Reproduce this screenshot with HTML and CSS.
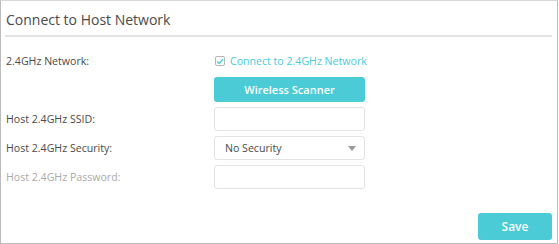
FILE: index.html
```html
<!DOCTYPE html>
<html lang="en">
<head>
  <meta charset="UTF-8">
  <title>Connect to Host Network</title>
  <link rel="stylesheet" href="styles.css">
</head>
<body>
  <div class="panel">
    <h2 class="panel-title">Connect to Host Network</h2>

    <div class="form">
      <div class="form-row row-check">
        <span class="label">2.4GHz Network:</span>
        <label class="check">
          <span class="check-box">
            <svg width="8" height="7" viewBox="0 0 8 7"><path d="M1 3.5 L3.2 5.6 L7 1.2" fill="none" stroke="#4acbd6" stroke-width="1.4"/></svg>
          </span>
          Connect to 2.4GHz Network
        </label>
      </div>

      <div class="form-row row-scan">
        <span class="label"></span>
        <button class="btn btn-scan">Wireless Scanner</button>
      </div>

      <div class="form-row">
        <span class="label">Host 2.4GHz SSID:</span>
        <div class="field"></div>
      </div>

      <div class="form-row">
        <span class="label">Host 2.4GHz Security:</span>
        <div class="field select">
          <span>No Security</span>
          <span class="arrow"></span>
        </div>
      </div>

      <div class="form-row">
        <span class="label disabled">Host 2.4GHz Password:</span>
        <div class="field"></div>
      </div>
    </div>

    <div class="actions">
      <button class="btn btn-save">Save</button>
    </div>
  </div>
</body>
</html>
```

FILE: styles.css
```css
:root {
  --teal: #4acbd6;
  --text-color: #4a4a4a;
  --muted: #aaa;
  --line: #e3e3e3;
}

body {
  margin: 0;
  font-family: "Open Sans", "Liberation Sans", sans-serif;
  color: var(--text-color);
  background: #fff;
}

.panel {
  box-sizing: border-box;
  width: 558px;
  height: 244px;
  border: 1px solid #bcbcbc;
  border-top-color: #d8d8d8;
  padding: 0 5px 0 4px;
}

.panel-title {
  margin: 0;
  height: 36px;
  padding-top: 9px;
  box-sizing: border-box;
  font-size: 14px;
  font-weight: normal;
  line-height: 20px;
  padding-left: 1px;
  border-bottom: 2px solid var(--line);
}

.form {
  display: flex;
  flex-direction: column;
  gap: 5px;
  margin-top: 15px;
  font-size: 10.6px;
}

.form-row {
  display: grid;
  grid-template-columns: 209px 151px;
  align-items: center;
  height: 24px;
}

.row-check {
  height: 18px;
  margin-bottom: 2px;
}

.row-scan {
  height: 25px;
}

.label {
  padding-left: 1px;
}

.label.disabled {
  color: var(--muted);
}

.check {
  display: flex;
  align-items: center;
  gap: 5px;
  color: var(--teal);
  padding-left: 1px;
  white-space: nowrap;
}

.check-box {
  box-sizing: border-box;
  width: 10px;
  height: 10px;
  border: 1px solid #b5b5b5;
  border-radius: 2px;
  display: flex;
  align-items: center;
  justify-content: center;
}

.btn {
  border: none;
  border-radius: 3px;
  background: var(--teal);
  color: #fff;
  font-family: inherit;
  font-weight: 600;
  padding: 0;
  cursor: pointer;
}

.btn-scan {
  height: 25px;
  width: 151px;
  font-size: 11px;
}

.field {
  box-sizing: border-box;
  height: 24px;
  border: 1px solid var(--line);
  border-radius: 3px;
}

.select {
  display: flex;
  align-items: center;
  justify-content: space-between;
  padding: 0 8px 0 10px;
}

.arrow {
  width: 0;
  height: 0;
  border-left: 4px solid transparent;
  border-right: 4px solid transparent;
  border-top: 5px solid #9a9a9a;
}

.actions {
  display: flex;
  justify-content: flex-end;
  margin-top: 24px;
}

.btn-save {
  width: 74px;
  height: 27px;
  font-size: 12px;
}
```
